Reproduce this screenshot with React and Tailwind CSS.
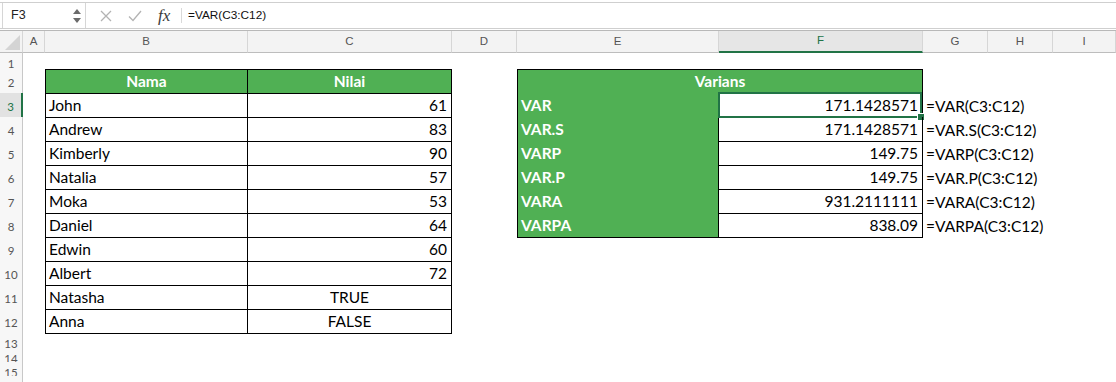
import React from "react";

const COLS =
  "grid grid-cols-[23px_22px_203px_204px_65px_202px_204px_65px_65px_1fr]";

const people = [
  ["John", "61"],
  ["Andrew", "83"],
  ["Kimberly", "90"],
  ["Natalia", "57"],
  ["Moka", "53"],
  ["Daniel", "64"],
  ["Edwin", "60"],
  ["Albert", "72"],
  ["Natasha", "TRUE"],
  ["Anna", "FALSE"],
];

const vars = [
  ["VAR", "171.1428571", "=VAR(C3:C12)"],
  ["VAR.S", "171.1428571", "=VAR.S(C3:C12)"],
  ["VARP", "149.75", "=VARP(C3:C12)"],
  ["VAR.P", "149.75", "=VAR.P(C3:C12)"],
  ["VARA", "931.2111111", "=VARA(C3:C12)"],
  ["VARPA", "838.09", "=VARPA(C3:C12)"],
];

const GREEN = "bg-[#50b054]";

function RowHead({ n, active }) {
  return (
    <div
      className={
        active
          ? "h-full flex items-center justify-center pt-[2px] bg-[#e2e2e2] text-[#217346] border-r-2 border-r-[#217346] border-b border-b-[#e3e3e3] text-[11.5px]"
          : "h-full flex items-center justify-center pt-[2px] bg-[#f7f7f7] text-[#555] border-r border-r-[#c8c8c8] border-b border-b-[#e6e6e6] text-[11.5px]"
      }
    >
      {n}
    </div>
  );
}

function EmptyRow({ n, h }) {
  return (
    <div className={`${COLS} ${h}`}>
      <RowHead n={n} />
    </div>
  );
}

export default function App() {
  return (
    <div className="w-[1116px] h-[382px] overflow-hidden bg-white font-['Liberation_Sans',sans-serif]">
      {/* FORMULA BAR */}
      <div className="pt-[2px]">
        <div className="h-[27px] border-y border-[#cfcfcf] flex items-stretch">
          <div className="w-[84px] ml-[2px] border-x border-[#d6d6d6] flex items-center relative">
            <span className="pl-[8px] text-[12.5px] text-[#222]">F3</span>
            <div className="absolute right-[4px] top-[6px] flex flex-col gap-[4px]">
              <svg width="8" height="5" viewBox="0 0 8 5">
                <path d="M4 0 L8 5 L0 5 Z" fill="#6b6b6b" />
              </svg>
              <svg width="8" height="5" viewBox="0 0 8 5">
                <path d="M0 0 L8 0 L4 5 Z" fill="#6b6b6b" />
              </svg>
            </div>
          </div>
          <div className="w-[95px] flex items-center">
            <svg width="12" height="12" viewBox="0 0 12 12" className="ml-[14px]">
              <path d="M1 1 L11 11 M11 1 L1 11" stroke="#b3b3b3" strokeWidth="1.3" />
            </svg>
            <svg width="14" height="12" viewBox="0 0 14 12" className="ml-[16px]">
              <path d="M1 6.5 L5 10.5 L13 1" stroke="#b3b3b3" strokeWidth="1.3" fill="none" />
            </svg>
            <span className="ml-[16px] font-['Liberation_Serif',serif] italic text-[17px] text-[#3a3a3a] leading-none">
              fx
            </span>
          </div>
          <div className="my-[5px] border-l border-[#d9d9d9]" />
          <div className="flex items-center pl-[6px] text-[11.8px] text-[#111]">
            =VAR(C3:C12)
          </div>
        </div>
        <div className="h-[2px] border-b border-[#b8b8b8]" />
      </div>

      {/* COLUMN HEADERS */}
      <div className={`${COLS} h-[22px] text-[11.5px] text-[#555]`}>
        <div className="bg-[#f3f3f3] border-r border-[#d6d6d6] border-b border-b-[#bdbdbd] relative">
          <svg width="16" height="16" viewBox="0 0 16 16" className="absolute left-[5px] top-[4px]">
            <path d="M15 0 L15 15 L0 15 Z" fill="#d4d4d4" />
          </svg>
        </div>
        {["A", "B", "C", "D", "E", "F", "G", "H", "I"].map((c) => (
          <div
            key={c}
            className={
              c === "F"
                ? "flex items-center justify-center bg-[#e6e6e6] text-[#217346] border-r border-[#d6d6d6] border-b-2 border-b-[#217346]"
                : "flex items-center justify-center bg-[#f3f3f3] border-r border-[#d6d6d6] border-b border-b-[#bdbdbd]"
            }
          >
            {c}
          </div>
        ))}
      </div>

      {/* SHEET */}
      <div className="font-['Lato',sans-serif] text-[15.5px] text-black">
        <EmptyRow n={1} h="h-[16px]" />

        {/* ROW 2 HEADERS */}
        <div className={`${COLS} h-[24px]`}>
          <RowHead n={2} />
          <div />
          <div className={`${GREEN} border border-black flex items-center justify-center font-bold text-white`}>
            Nama
          </div>
          <div className={`${GREEN} border-y border-r border-black flex items-center justify-center font-bold text-white`}>
            Nilai
          </div>
          <div />
          <div className={`col-span-2 ${GREEN} border-t border-x border-b border-black flex items-center justify-center font-bold text-white`}>
            Varians
          </div>
        </div>

        {people.map(([name, val], i) => {
          const n = i + 3;
          const v = vars[i];
          const num = val !== "TRUE" && val !== "FALSE";
          return (
            <div key={n} className={`${COLS} h-[24px]`}>
              <RowHead n={n} active={n === 3} />
              <div />
              <div className="border-x border-b border-black flex items-center pl-[3px] pt-[1px]">
                {name}
              </div>
              <div
                className={
                  num
                    ? "border-r border-b border-black flex items-center justify-end pr-[4px] pt-[1px]"
                    : "border-r border-b border-black flex items-center justify-center pt-[1px]"
                }
              >
                {val}
              </div>
              <div />
              {v ? (
                <>
                  <div className={`${GREEN} border-x border-b border-black flex items-center pl-[3px] pt-[1px] font-bold text-white`}>
                    {v[0]}
                  </div>
                  <div className="border-r border-b border-black flex items-center justify-end pr-[4px] pt-[1px] relative">
                    {v[1]}
                    {n === 3 && (
                      <div className="absolute -left-[1px] -top-[1px] right-0 -bottom-[1px] border-2 border-[#217346]">
                        <div className="absolute -right-[4px] -bottom-[4px] w-[6px] h-[6px] bg-[#217346] outline outline-1 outline-white" />
                      </div>
                    )}
                  </div>
                  <div className="flex items-center pl-[3px] pt-[1px] whitespace-nowrap">
                    {v[2]}
                  </div>
                </>
              ) : null}
            </div>
          );
        })}

        <EmptyRow n={13} h="h-[15px]" />
        <EmptyRow n={14} h="h-[14px]" />
        <EmptyRow n={15} h="h-[14px]" />
        <div className={`${COLS} h-[14px]`}>
          <div className="h-full bg-[#f7f7f7] border-r border-r-[#c8c8c8]" />
        </div>
      </div>
    </div>
  );
}
